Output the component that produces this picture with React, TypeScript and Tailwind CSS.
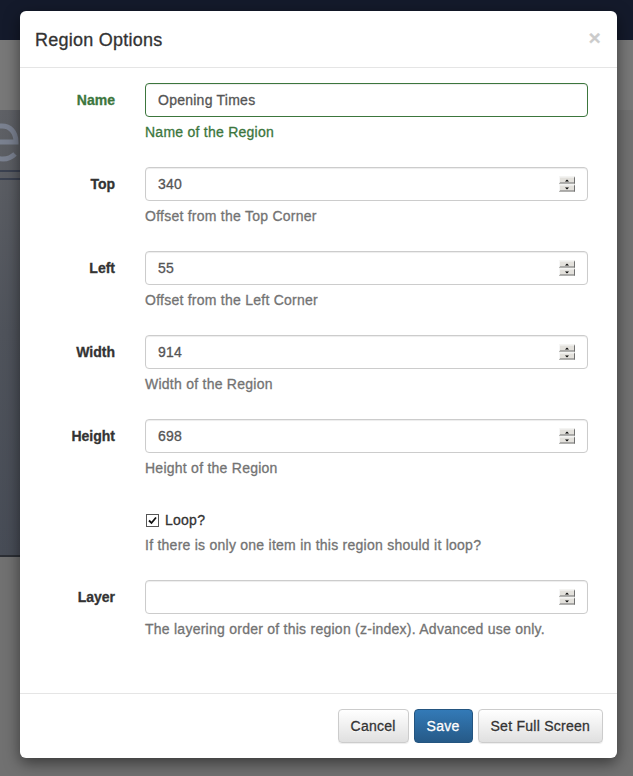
import { useState } from "react";

type Field = {
    label: string;
    value: string;
    help: string;
    valid?: boolean;
    spinner?: boolean;
};

const fields: Field[] = [
    { label: "Name", value: "Opening Times", help: "Name of the Region", valid: true },
    { label: "Top", value: "340", help: "Offset from the Top Corner", spinner: true },
    { label: "Left", value: "55", help: "Offset from the Left Corner", spinner: true },
    { label: "Width", value: "914", help: "Width of the Region", spinner: true },
    { label: "Height", value: "698", help: "Height of the Region", spinner: true },
];

function Spinner() {
    return (
        <div className="absolute right-[13px] top-1/2 -translate-y-1/2 flex flex-col gap-[1px]">
            <span className="w-[16px] h-[7px] flex items-center justify-center bg-[#e3e1dc] border border-t-[#f7f7f7] border-l-[#f7f7f7] border-r-[#707070] border-b-[#707070]">
                <span className="w-0 h-0 border-l-[2px] border-r-[2px] border-b-[2px] border-l-transparent border-r-transparent border-b-black" />
            </span>
            <span className="w-[16px] h-[7px] flex items-center justify-center bg-[#e3e1dc] border border-t-[#f7f7f7] border-l-[#f7f7f7] border-r-[#707070] border-b-[#707070]">
                <span className="w-0 h-0 border-l-[2px] border-r-[2px] border-t-[2px] border-l-transparent border-r-transparent border-t-black" />
            </span>
        </div>
    );
}

function FormRow({ field }: { field: Field }) {
    const [value, setValue] = useState(field.value);
    return (
        <div className="flex gap-[30px] mb-[15px]">
            <label className={`w-[80px] shrink-0 text-right font-bold tracking-normal pt-[7px] leading-[20px] ${field.valid ? "text-[#3c763d]" : "text-[#333]"}`}>
                {field.label}
            </label>
            <div className="flex-1">
                <div className="relative">
                    <input
                        type="text"
                        value={value}
                        onChange={(e) => setValue(e.target.value)}
                        className={`w-full h-[34px] px-[12px] rounded-[4px] border bg-white text-[#555] leading-[20px] tracking-[0.25px] [-webkit-text-stroke-width:0.3px] shadow-[inset_0_1px_1px_rgba(0,0,0,0.075)] outline-none ${field.valid ? "border-[#3c763d]" : "border-[#ccc]"}`}
                    />
                    {field.spinner && <Spinner />}
                </div>
                <p className={`mt-[5px] mb-[10px] leading-[20px] ${field.valid ? "text-[#3c763d]" : "text-[#737373]"}`}>{field.help}</p>
            </div>
        </div>
    );
}

export default function App() {
    const [loop, setLoop] = useState(true);

    return (
        <div className="relative w-[633px] h-[776px] overflow-hidden bg-[#717171] text-[14px] text-[#333] tracking-[0.25px] [-webkit-text-stroke-width:0.3px] font-['Liberation_Sans',Arial,sans-serif]">
            {/* page behind the backdrop */}
            <div className="h-[40px] bg-[#141a2b]" />
            <div className="h-[70px] bg-[#787878]" />
            <div className="h-[447px] w-[40px] bg-gradient-to-b from-[#5f6166] via-[#4f535b] to-[#474c56] border-b-2 border-[#2c2f35] pt-[12px]">
                <svg width="20" height="40" viewBox="0 0 20 40">
                    <path d="M-6 20 H16 C16 10 10 4 2 4 C-8 4 -14 12 -14 21 C-14 31 -7 37 3 37 C8 37 12 35 15 32" stroke="#7a8190" strokeWidth="5" fill="none" />
                </svg>
                <div className="mt-[8px] h-[2px] bg-[#3a4150]" />
                <div className="mt-[6px] h-[2px] bg-[#3a4150]" />
            </div>

            {/* modal */}
            <div className="absolute left-[20px] top-[11px] w-[597px] bg-white rounded-[6px] shadow-[0_5px_15px_rgba(0,0,0,0.5)]">
                <div className="flex items-center justify-between px-[15px] py-[15px] border-b border-[#e5e5e5]">
                    <h4 className="text-[18px] leading-[26px] text-[#333] relative top-[1px]">Region Options</h4>
                    <button className="text-[21px] font-bold leading-none text-black opacity-20 -mt-[4px] pr-[1px]">×</button>
                </div>

                <div className="pt-[15px] pb-[29px] pl-[15px] pr-[29px]">
                    {fields.map((f) => (
                        <FormRow key={f.label} field={f} />
                    ))}

                    <div className="flex gap-[30px] mb-[15px]">
                        <div className="w-[80px] shrink-0" />
                        <div className="flex-1 pt-[7px]">
                            <label className="flex items-center leading-[20px] text-[#333] cursor-pointer" onClick={() => setLoop(!loop)}>
                                <span className="w-[13px] h-[13px] ml-[1px] mr-[6px] border border-[#555] bg-white flex items-center justify-center">
                                    {loop && (
                                        <svg width="9" height="9" viewBox="0 0 9 9">
                                            <path d="M1 4.5 L3.5 7 L8 1.5" stroke="#111" strokeWidth="1.8" fill="none" />
                                        </svg>
                                    )}
                                </span>
                                Loop?
                            </label>
                            <p className="mt-[5px] mb-[10px] leading-[20px] text-[#737373]">If there is only one item in this region should it loop?</p>
                        </div>
                    </div>

                    <FormRow field={{ label: "Layer", value: "", help: "The layering order of this region (z-index). Advanced use only.", spinner: true }} />
                </div>

                <div className="flex justify-end gap-[5px] py-[15px] pl-[15px] pr-[14px] border-t border-[#e5e5e5]">
                    <button className="h-[34px] px-[12px] rounded-[4px] border border-[#ccc] text-[#333] bg-gradient-to-b from-white to-[#e0e0e0] shadow-[inset_0_1px_0_rgba(255,255,255,0.15),0_1px_1px_rgba(0,0,0,0.075)] [text-shadow:0_1px_0_#fff]">
                        Cancel
                    </button>
                    <button className="h-[34px] px-[12px] rounded-[4px] border border-[#245580] text-white bg-gradient-to-b from-[#337ab7] to-[#265a88] [text-shadow:0_-1px_0_rgba(0,0,0,0.2)]">
                        Save
                    </button>
                    <button className="h-[34px] px-[12px] rounded-[4px] border border-[#ccc] text-[#333] bg-gradient-to-b from-white to-[#e0e0e0] shadow-[inset_0_1px_0_rgba(255,255,255,0.15),0_1px_1px_rgba(0,0,0,0.075)] [text-shadow:0_1px_0_#fff]">
                        Set Full Screen
                    </button>
                </div>
            </div>
        </div>
    );
}
